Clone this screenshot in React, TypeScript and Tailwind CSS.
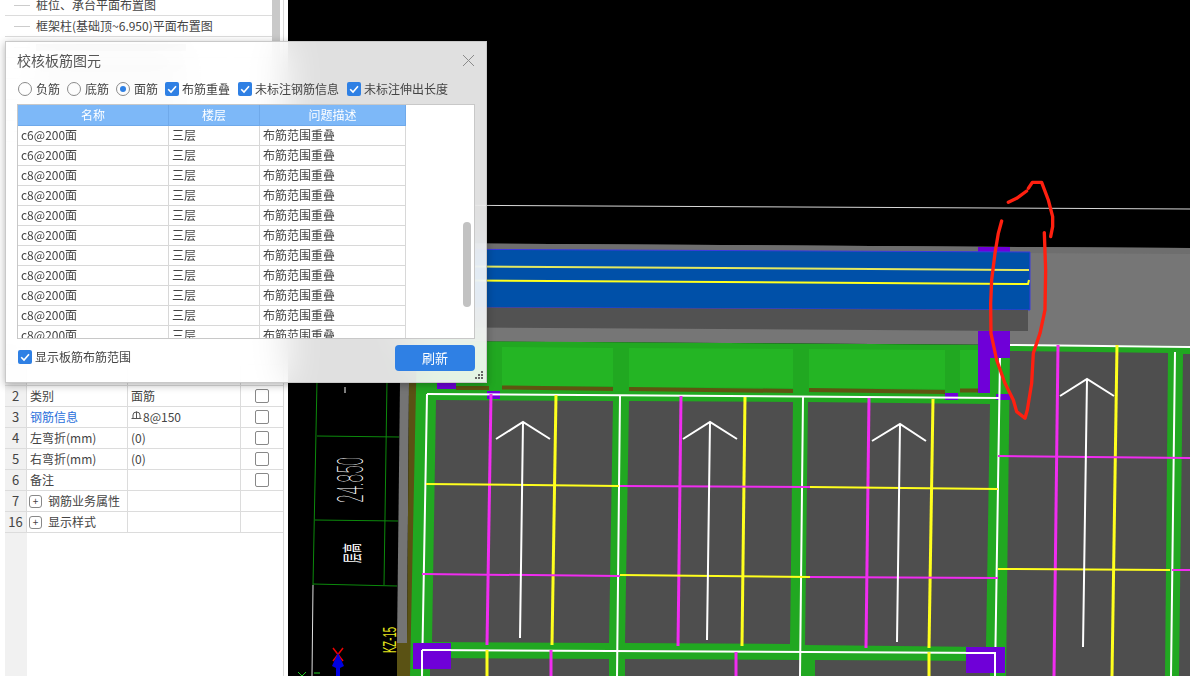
const rows = ["c6", "c6", "c8", "c8", "c8", "c8", "c8", "c8", "c8", "c8", "c8"];

function Check({ className = "" }: { className?: string }) {
  return (
    <span className={`flex h-[14px] w-[14px] shrink-0 items-center justify-center rounded-[2px] bg-[#2f80e4] ${className}`}>
      <svg width="12" height="12" viewBox="0 0 12 12" fill="none" stroke="white" strokeWidth="1.6">
        <path d="M2.2 6.2 L5 9 L10 3.2" />
      </svg>
    </span>
  );
}

function Radio({ on = false }: { on?: boolean }) {
  return (
    <span className="flex h-[14px] w-[14px] shrink-0 items-center justify-center rounded-full border border-[#8a8a8a]">
      {on && <span className="h-[6px] w-[6px] rounded-full bg-[#2f80e4]" />}
    </span>
  );
}

function Dialog() {
  return (
    <div className="absolute left-[5px] top-[41px] flex h-[342px] w-[482px] flex-col border border-[#c9c9c9] bg-white/[0.88] px-[11px] text-xs text-[#444] shadow-[0_2px_8px_rgba(0,0,0,0.3)] backdrop-blur-[18px]">
      <div className="flex h-[37px] shrink-0 items-center justify-between">
        <span className="text-[14px] text-[#555]">校核板筋图元</span>
        <svg width="13" height="13" viewBox="0 0 13 13" stroke="#8a8a8a" strokeWidth="1">
          <path d="M1 1 L12 12 M12 1 L1 12" />
        </svg>
      </div>
      <div className="flex h-[20px] shrink-0 items-center pl-px">
        <Radio /><span className="ml-1 mr-[7px]">负筋</span>
        <Radio /><span className="ml-1 mr-[7px]">底筋</span>
        <Radio on /><span className="ml-1 mr-[7px]">面筋</span>
        <Check /><span className="ml-[3px] mr-2">布筋重叠</span>
        <Check /><span className="ml-[3px] mr-2">未标注钢筋信息</span>
        <Check /><span className="ml-[3px]">未标注伸出长度</span>
      </div>
      <div className="relative mt-[5px] h-[235px] w-[458px] shrink-0 overflow-hidden border border-[#c8c8c8] bg-white">
        <div className="grid h-[21px] w-[388px] grid-cols-[151px_91px_146px] border-b border-[#6fa9ea] bg-[#7db8f8] text-center leading-[20px] text-white">
          <span className="border-r border-[#6fa9ea]">名称</span>
          <span className="border-r border-[#6fa9ea]">楼层</span>
          <span className="border-r border-[#6fa9ea]">问题描述</span>
        </div>
        {rows.map((r, i) => (
          <div key={i} className="grid h-[20px] w-[388px] grid-cols-[151px_91px_146px] border-b border-[#d8d8d8] leading-[18px]">
            <span className="border-r border-[#d8d8d8] pl-[3px]">{r}@200面</span>
            <span className="border-r border-[#d8d8d8] pl-[3px]">三层</span>
            <span className="border-r border-[#d8d8d8] pl-[3px]">布筋范围重叠</span>
          </div>
        ))}
        <div className="absolute left-[445px] top-[117px] h-[85px] w-[8px] rounded-full bg-[#c2c2c2]" />
      </div>
      <div className="flex flex-1 items-start justify-between pt-[6px]">
        <div className="flex h-[24px] items-center pl-px">
          <Check /><span className="ml-[3px]">显示板筋布筋范围</span>
        </div>
        <button className="h-[26px] w-[80px] rounded-[4px] bg-[#2f80e4] text-[13px] text-white">刷新</button>
      </div>
      <svg width="9" height="9" viewBox="0 0 9 9" fill="#666" className="absolute bottom-[2px] right-[2px]">
        <rect x="6" y="0" width="2" height="2" />
        <rect x="3" y="3" width="2" height="2" />
        <rect x="6" y="3" width="2" height="2" />
        <rect x="0" y="6" width="2" height="2" />
        <rect x="3" y="6" width="2" height="2" />
        <rect x="6" y="6" width="2" height="2" />
      </svg>
    </div>
  );
}

function RebarMark() {
  return (
    <svg width="11" height="10" viewBox="0 0 11 10" fill="none" stroke="#555" strokeWidth="1" className="mb-[3px] mr-[1px]">
      <path d="M2 7 V4 A3.5 3 0 0 1 9 4 V7 M0.5 7.5 H10.5 M5.5 0.5 V7.5" />
    </svg>
  );
}

const props: { no: number | string; name: string; value?: React.ReactNode; blue?: boolean; box?: boolean; plus?: boolean }[] = [
  { no: "", name: "" },
  { no: "", name: "" },
  { no: 2, name: "类别", value: "面筋", box: true },
  { no: 3, name: "钢筋信息", value: <span className="flex items-center"><RebarMark />8@150</span>, blue: true, box: true },
  { no: 4, name: "左弯折(mm)", value: "(0)", box: true },
  { no: 5, name: "右弯折(mm)", value: "(0)", box: true },
  { no: 6, name: "备注", box: true },
  { no: 7, name: "钢筋业务属性", plus: true },
  { no: 16, name: "显示样式", plus: true },
];

const tree = ["桩位、承台平面布置图", "框架柱(基础顶~6.950)平面布置图", "", "", "", "", ""];

function SidePanel() {
  return (
    <div className="flex h-[676px] w-[288px] shrink-0 flex-col bg-white text-xs text-[#444]">
      <div className="flex h-[344px] shrink-0">
        <div className="w-[272px] pl-[5px]">
          {tree.map((t, i) => (
            <div key={i} className="flex h-[21px] items-center border-b border-[#dcdcdc] first:h-[16px] first:pb-[5px]">
              <span className="ml-[9px] mr-[6px] h-px w-[16px] bg-[#ccc]" />
              {t ? <span>{t}</span> : <span className="h-[7px] w-[150px] bg-[#aaa]" />}
            </div>
          ))}
        </div>
        <div className="h-full w-[8px] bg-[#c9c9c9]" />
        <div className="h-full w-[3px]" />
        <div className="h-full w-px bg-[#d9d9d9]" />
      </div>
      <div className="flex flex-1">
        <div className="w-[5px]" />
        <div className="flex w-[278px] flex-col">
          {props.map((p, i) => (
            <div key={i} className="grid h-[21px] grid-cols-[22px_101px_113px_42px] border-b border-[#dcdcdc] leading-[20px]">
              <span className="border-r border-[#dcdcdc] bg-[#f1f1f1] text-center text-[13px]">{p.no}</span>
              <span className={`flex items-center border-r border-[#dcdcdc] pl-[3px] ${p.blue ? "text-[#2a6fdb]" : ""}`}>
                {p.plus && (
                  <span className="ml-[-1px] mr-[6px] flex h-[13px] w-[13px] items-center justify-center rounded-[3px] border border-[#888] text-[10px] leading-none">+</span>
                )}
                {p.name}
              </span>
              <span className="border-r border-[#dcdcdc] pl-[3px]">{p.value}</span>
              <span className="flex items-center justify-center">
                {p.box && <span className="h-[14px] w-[14px] rounded-[2px] border border-[#888] bg-white" />}
              </span>
            </div>
          ))}
          <div className="flex-1">
            <div className="h-full w-[22px] bg-[#f1f1f1]" />
          </div>
        </div>
        <div className="w-px bg-[#d9d9d9]" />
      </div>
    </div>
  );
}

const DARK = "#4e4e4e";
const MAG = "#f02cf0";
const YEL = "#ffff1e";
const PUR = "#6f00d8";

function Line({ d, c = "white", w = 2 }: { d: string; c?: string; w?: number }) {
  return <path d={d} stroke={c} strokeWidth={w} fill="none" />;
}

function CadView() {
  return (
    <svg className="block h-[676px] w-[902px] shrink-0" viewBox="288 0 902 676">
      <rect x="288" y="0" width="902" height="676" fill="black" />
      <Line d="M400 205 L1190 209" c="#d8d8d8" w={1} />

      {/* left annotation strip */}
      <Line d="M317 380 L313 585 M387 380 L384 585 M317 436 L399 437 M315 520 L398 521 M313 584 L397 586" c="#0c8a0c" w={1} />
      <Line d="M313 585 L312 676" c="#e0e0e0" w={1} />
      <Line d="M345 387 V393" c="white" w={1} />
      <text x="363" y="503" transform="rotate(-90 363 503)" fontFamily="Roboto" fontWeight="100" fontSize="37" textLength="46" lengthAdjust="spacingAndGlyphs" fill="white">24.850</text>
      <text x="360" y="563" transform="rotate(-90 360 563)" fontFamily="Noto Sans CJK SC" fontSize="20" textLength="20" lengthAdjust="spacingAndGlyphs" fill="white">层高</text>
      <text x="396" y="653" transform="rotate(-90 396 653)" fontFamily="Liberation Sans" fontSize="19" textLength="26" lengthAdjust="spacingAndGlyphs" fill="#e8e81e">KZ-15</text>
      <Line d="M333 648 L343 661 M343 648 L333 661" c="#f00000" w={1.5} />
      <path d="M338 653 L344 666 L340 668 V676 H336 V668 L332 666 Z" fill="#0000e0" />
      <Line d="M298 672 L302 676 M306 672 L302 676 M314 673 H320" c="#22cc22" w={1} />

      {/* slab and beam */}
      <polygon points="397,243 1190,248 1190,346 397,341" fill="#767676" />
      <polygon points="397,243 1190,248 1190,254 397,249" fill="#6e6e6e" />
      <rect x="978" y="247" width="32" height="6" fill={PUR} />
      <polygon points="400,249 1030,252 1030,310 400,307" fill="#0050a8" stroke="#3a3ae0" strokeWidth="1" />
      <Line d="M400 266 L1029 270" c="#e4e860" w={2} />
      <Line d="M400 280 L1028 284 L1029 280" c={YEL} w={2} />
      <polygon points="400,307 1028,310 1028,331 400,327" fill="#525252" />

      {/* green frame */}
      <polygon points="400,383 409,383 407,643 397,643" fill="#747474" />
      <polygon points="409,383 417,383 413,676 397,676 397,643 407,643" fill="#5a5214" />
      <polygon points="417,341 1190,346 1190,676 410,676" fill="#21a821" />
      <polygon points="502,347 613,348 613,386 502,386" fill="#24b524" />
      <polygon points="629,348 793,349 793,388 629,387" fill="#24b524" />
      <polygon points="809,349 945,350 945,389 809,388" fill="#24b524" />
      <polygon points="960,350 978,350 978,389 960,389" fill="#24b524" />
      <Line d="M456 388 H489 M502 387.5 L613 389 M629 389 L793 391 M809 390 L945 392 M960 390.5 H978" c="#5e5510" w={4} />

      {/* plates */}
      <polygon points="436,400 613,401 609,643 432,642" fill={DARK} />
      <polygon points="629,401 793,402 790,644 625,643" fill={DARK} />
      <polygon points="808,402 990,404 986,647 805,645" fill={DARK} />
      <polygon points="1010,351 1168,353 1165,676 1006,676" fill={DARK} />
      <polygon points="1183,354 1190,354 1190,676 1179,676" fill={DARK} />
      <polygon points="430,658 609,659 609,676 430,676" fill={DARK} />
      <polygon points="625,659 800,660 800,676 625,676" fill={DARK} />
      <polygon points="815,660 990,661 990,676 815,676" fill={DARK} />

      {/* purple columns */}
      <rect x="437" y="380" width="19" height="9" fill={PUR} />
      <rect x="487" y="391" width="13" height="8" fill={PUR} />
      <rect x="945" y="393" width="13" height="7" fill={PUR} />
      <rect x="996" y="394" width="14" height="6" fill={PUR} />
      <polygon points="978,331 1010,331 1010,358 990,358 990,393 978,393" fill={PUR} />

      {/* rebar lines */}
      <Line d="M427 394 L1000 398 M422 650 L995 653 M1010 345 L1190 347" />
      <Line d="M427 394 L422 676 M620 396 L617 676 M803 397 L800 676 M1000 358 L995 676 M1175 352 L1171 676" />
      <Line d="M491 394 L487 645" c={MAG} w={3} />
      <Line d="M681 396 L678 646" c={MAG} w={3} />
      <Line d="M869 398 L866 648" c={MAG} w={3} />
      <Line d="M1058 345 L1054 676" c={MAG} w={3} />
      <Line d="M551 650 V676 M736 652 V676" c={MAG} w={3} />
      <Line d="M556 395 L552 645" c={YEL} w={3} />
      <Line d="M745 397 L742 646" c={YEL} w={3} />
      <Line d="M933 399 L929 648" c={YEL} w={3} />
      <Line d="M1117 345 L1112 676" c={YEL} w={3} />
      <Line d="M487 650 V676 M929 652 V676" c={YEL} w={3} />
      <Line d="M426 484 L619 486 M810 487 L998 489 M620 575 L810 577 M998 569 L1170 570" c={YEL} />
      <Line d="M620 486 L810 487 M422 574 L620 576 M810 577 L998 578 M998 456 L1190 458 M1172 570 H1190" c={MAG} />
      <Line d="M523 422 L520 638 M496 439 L523 422 L550 439" />
      <Line d="M710 422 L707 640 M683 439 L710 422 L737 439" />
      <Line d="M900 424 L897 642 M872 441 L900 424 L926 441" />
      <Line d="M1087 379 L1083 647 M1060 396 L1087 379 L1114 396" />
      <rect x="413" y="643" width="38" height="26" fill={PUR} />
      <Line d="M422 650 H451 M422 650 V676" />
      <rect x="966" y="647" width="39" height="26" fill={PUR} />
      <Line d="M966 653 L995 653 V676" />

      {/* hand-drawn red mark */}
      <g transform="translate(900 170) scale(0.3333)" fill="none" stroke="#ff2010" strokeWidth="10" strokeLinecap="round" strokeLinejoin="round">
        <path d="M305 153 L295 190 L285 250 L275 330 L272 400 L273 490 L290 570 L315 640 L340 690 L350 725 L375 745 L382 720 L395 640 L400 550 L420 490 L435 420 L437 300 L433 188" />
        <path d="M325 97 L350 85 L380 63" />
        <path d="M385 55 L397 37 L425 37 L445 90 L458 140 L458 170 L452 200" />
      </g>
    </svg>
  );
}

export default function App() {
  return (
    <div className="relative flex h-[676px] w-[1190px] overflow-hidden bg-white font-['Noto_Sans_CJK_SC',sans-serif]">
      <SidePanel />
      <CadView />
      <Dialog />
    </div>
  );
}
